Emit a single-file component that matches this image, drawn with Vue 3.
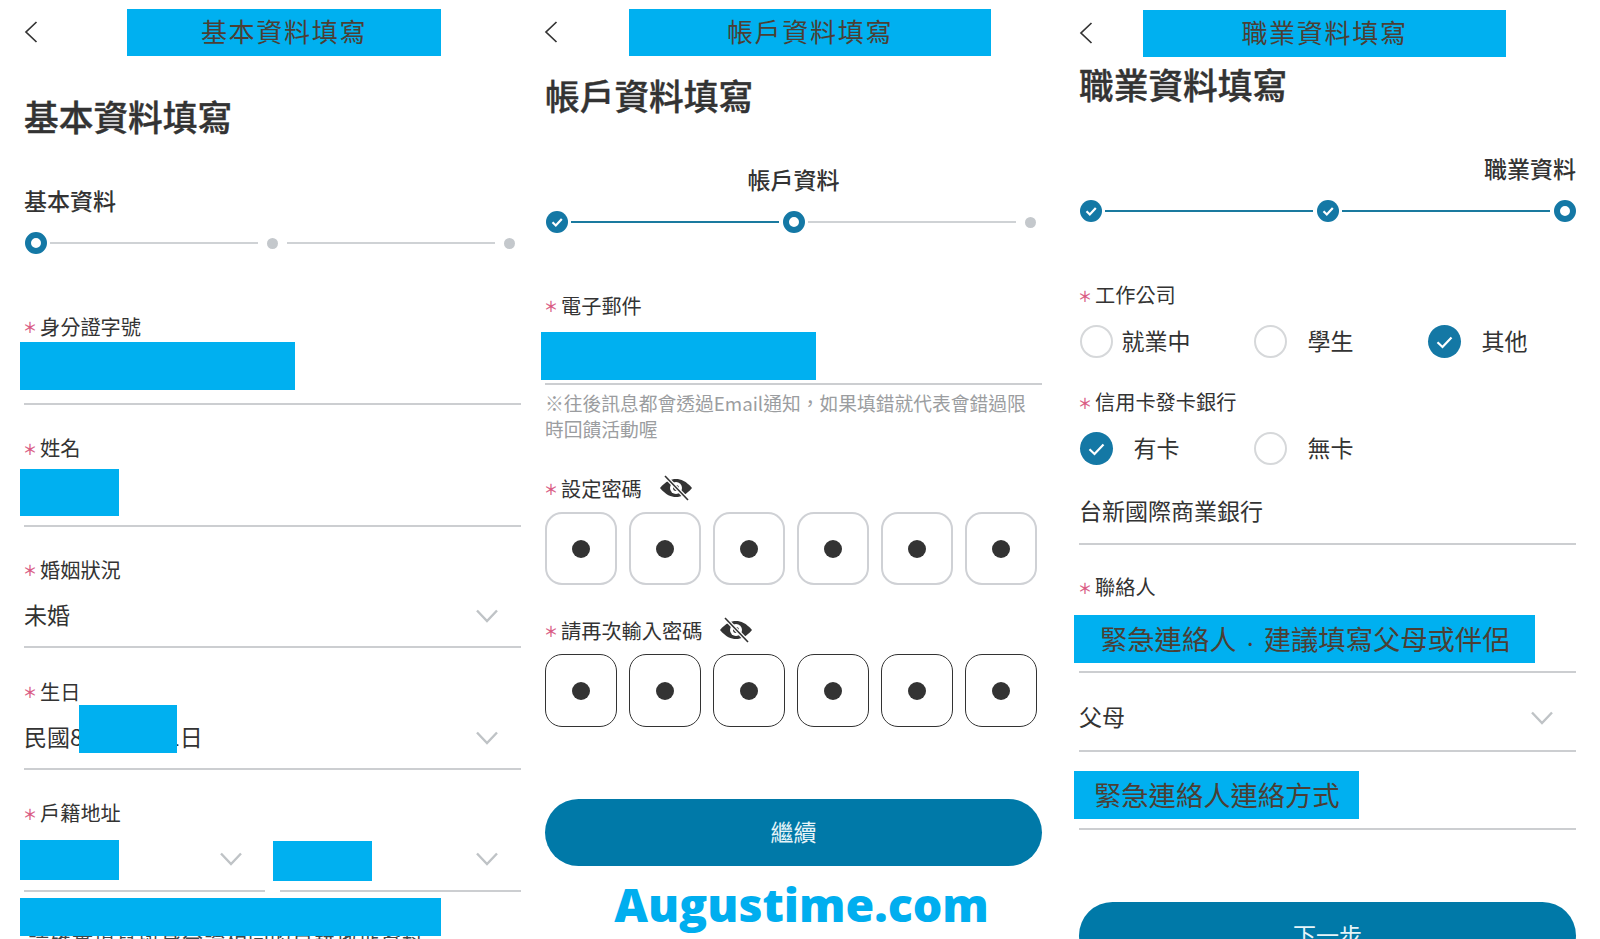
<script setup>
const otp = [1, 2, 3, 4, 5, 6]
</script>

<template>
  <div class="page">
    <!-- 基本資料 -->
    <section class="panel p1">
      <header class="top">
        <svg class="back" viewBox="0 0 14 22"><path d="M12.5 1 2 11l10.5 10" /></svg>
        <div class="mask bar b1">基本資料填寫</div>
      </header>
      <h1 class="title t1">基本資料填寫</h1>
      <div class="step-label l1">基本資料</div>
      <div class="stepper">
        <span class="slot"><i class="ring"></i></span>
        <span class="track"></span>
        <span class="slot"><i class="dot"></i></span>
        <span class="track"></span>
        <span class="slot"><i class="dot"></i></span>
      </div>

      <div class="field first">
        <div class="label"><em>＊</em>身分證字號</div>
        <div class="control"><div class="mask fill m-id"></div></div>
      </div>
      <div class="field">
        <div class="label"><em>＊</em>姓名</div>
        <div class="control"><div class="mask fill m-name"></div></div>
      </div>
      <div class="field">
        <div class="label"><em>＊</em>婚姻狀況</div>
        <div class="control">
          <span class="value">未婚</span>
          <svg class="chev" viewBox="0 0 22 14"><path d="M1 1.5 11 12 21 1.5" /></svg>
        </div>
      </div>
      <div class="field">
        <div class="label"><em>＊</em>生日</div>
        <div class="control">
          <span class="value">民國88年1月11日</span>
          <div class="mask m-birth"></div>
          <svg class="chev" viewBox="0 0 22 14"><path d="M1 1.5 11 12 21 1.5" /></svg>
        </div>
      </div>
      <div class="field addr">
        <div class="label"><em>＊</em>戶籍地址</div>
        <div class="split">
          <div class="control half">
            <div class="mask fill m-city"></div>
            <svg class="chev" viewBox="0 0 22 14"><path d="M1 1.5 11 12 21 1.5" /></svg>
          </div>
          <div class="control half">
            <div class="mask fill m-area"></div>
            <svg class="chev" viewBox="0 0 22 14"><path d="M1 1.5 11 12 21 1.5" /></svg>
          </div>
        </div>
        <div class="street">
          <span class="street-text">請確實填寫與身分證相同的戶籍地址資料</span>
          <div class="mask m-street"></div>
        </div>
      </div>
    </section>

    <!-- 帳戶資料 -->
    <section class="panel p2">
      <header class="top">
        <svg class="back" viewBox="0 0 14 22"><path d="M12.5 1 2 11l10.5 10" /></svg>
        <div class="mask bar b2">帳戶資料填寫</div>
      </header>
      <h1 class="title t2">帳戶資料填寫</h1>
      <div class="step-label l2">帳戶資料</div>
      <div class="stepper">
        <span class="slot">
          <i class="done"><svg viewBox="0 0 22 22"><path d="M6.5 11.3 9.8 14.5 15.8 8" /></svg></i>
        </span>
        <span class="track on"></span>
        <span class="slot"><i class="ring"></i></span>
        <span class="track"></span>
        <span class="slot"><i class="dot"></i></span>
      </div>

      <div class="label email"><em>＊</em>電子郵件</div>
      <div class="email-box"><div class="mask m-email"></div></div>
      <p class="hint">※往後訊息都會透過Email通知，如果填錯就代表會錯過限時回饋活動喔</p>

      <div class="label pw pw1">
        <em>＊</em>設定密碼
        <svg class="eye" viewBox="0 0 34 26">
          <path class="eye-shape" d="M1 13C7 6 12 4 17 4s10 2 16 9c-6 7-11 9-16 9S7 20 1 13Z" />
          <circle class="eye-hole" cx="17" cy="13" r="6" />
          <circle class="eye-pupil" cx="17" cy="13" r="3" />
          <path class="eye-gap" d="M6 1 29 25" />
          <path class="eye-slash" d="M6 1 29 25" />
        </svg>
      </div>
      <div class="otp">
        <span v-for="n in otp" :key="n" class="cell"><i></i></span>
      </div>

      <div class="label pw pw2">
        <em>＊</em>請再次輸入密碼
        <svg class="eye" viewBox="0 0 34 26">
          <path class="eye-shape" d="M1 13C7 6 12 4 17 4s10 2 16 9c-6 7-11 9-16 9S7 20 1 13Z" />
          <circle class="eye-hole" cx="17" cy="13" r="6" />
          <circle class="eye-pupil" cx="17" cy="13" r="3" />
          <path class="eye-gap" d="M6 1 29 25" />
          <path class="eye-slash" d="M6 1 29 25" />
        </svg>
      </div>
      <div class="otp dark">
        <span v-for="n in otp" :key="n" class="cell"><i></i></span>
      </div>

      <button class="cta c2" type="button">繼續</button>
      <div class="brand">Augustime.com</div>
    </section>

    <!-- 職業資料 -->
    <section class="panel p3">
      <header class="top t-low">
        <svg class="back" viewBox="0 0 14 22"><path d="M12.5 1 2 11l10.5 10" /></svg>
        <div class="mask bar b3">職業資料填寫</div>
      </header>
      <h1 class="title t3">職業資料填寫</h1>
      <div class="step-label l3">職業資料</div>
      <div class="stepper">
        <span class="slot">
          <i class="done"><svg viewBox="0 0 22 22"><path d="M6.5 11.3 9.8 14.5 15.8 8" /></svg></i>
        </span>
        <span class="track on"></span>
        <span class="slot">
          <i class="done"><svg viewBox="0 0 22 22"><path d="M6.5 11.3 9.8 14.5 15.8 8" /></svg></i>
        </span>
        <span class="track on"></span>
        <span class="slot"><i class="ring"></i></span>
      </div>

      <div class="label work"><em>＊</em>工作公司</div>
      <div class="radios">
        <div class="radio"><span class="circle"></span><span class="rtext near">就業中</span></div>
        <div class="radio"><span class="circle"></span><span class="rtext">學生</span></div>
        <div class="radio">
          <span class="circle checked"><svg viewBox="0 0 33 33"><path d="M9.5 17.3 14.5 22 23.5 12.5" /></svg></span>
          <span class="rtext">其他</span>
        </div>
      </div>

      <div class="label bank"><em>＊</em>信用卡發卡銀行</div>
      <div class="radios">
        <div class="radio">
          <span class="circle checked"><svg viewBox="0 0 33 33"><path d="M9.5 17.3 14.5 22 23.5 12.5" /></svg></span>
          <span class="rtext">有卡</span>
        </div>
        <div class="radio"><span class="circle"></span><span class="rtext">無卡</span></div>
      </div>

      <div class="rowline bank-name"><span class="value">台新國際商業銀行</span></div>

      <div class="label contact"><em>＊</em>聯絡人</div>
      <div class="rowline r-contact">
        <div class="mask wide">緊急連絡人<span class="sep">·</span>建議填寫父母或伴侶</div>
      </div>
      <div class="rowline r-rel">
        <span class="value">父母</span>
        <svg class="chev rel" viewBox="0 0 22 14"><path d="M1 1.5 11 12 21 1.5" /></svg>
      </div>
      <div class="rowline r-way">
        <div class="mask narrow">緊急連絡人連絡方式</div>
      </div>

      <button class="cta c3" type="button">下一步</button>
    </section>
  </div>
</template>

<style>
html,
body {
  margin: 0;
  background: #fff;
  overflow: hidden;
}
</style>

<style scoped>
.page {
  display: flex;
  height: 939px;
  overflow: hidden;
  background: #fff;
  font-family: "Noto Sans CJK TC", "Noto Sans", sans-serif;
  color: #333;
}
.panel {
  flex: none;
  width: 497px;
  box-sizing: border-box;
}
.p1 { margin-left: 24px; }
.p2 { margin-left: 24px; }
.p3 { margin-left: 37px; }

.top {
  display: flex;
  align-items: center;
  height: 47px;
  margin-top: 9px;
}
.t-low { margin-top: 10px; }
.back {
  flex: none;
  width: 14px;
  height: 22px;
  margin-top: -2px;
  fill: none;
  stroke: #333;
  stroke-width: 1.7;
}
.p2 .back { margin-left: -1px; }
.mask {
  background: #00b0f0;
  color: #4b3f35;
  flex: none;
}
.bar {
  height: 47px;
  line-height: 44px;
  text-align: center;
  font-size: 26px;
  letter-spacing: 1.7px;
}
.b1 { width: 314px; margin-left: 89px; }
.b2 { width: 362px; margin-left: 71px; }
.b3 { width: 363px; margin-left: 50px; }

.title {
  margin: 0;
  font-size: 34.7px;
  line-height: 48px;
  font-weight: 500;
  -webkit-text-stroke: 0.4px #333;
  color: #333;
}
.t1 { margin-top: 36px; }
.t2 { margin-top: 15px; }
.t3 { margin-top: 3px; }

.step-label {
  font-size: 23px;
  line-height: 32px;
  font-weight: 500;
  color: #333;
}
.l1 { margin-top: 44px; }
.l2 { margin-top: 44px; text-align: center; }
.l3 { margin-top: 44px; text-align: right; }

.stepper {
  display: flex;
  align-items: center;
  height: 22px;
  width: 496px;
  margin-left: 0.5px;
  margin-top: 16px;
}
.slot {
  flex: none;
  width: 22px;
  height: 22px;
  display: flex;
  align-items: center;
  justify-content: center;
}
.slot i {
  display: block;
  box-sizing: border-box;
  border-radius: 50%;
}
.ring {
  width: 22px;
  height: 22px;
  border: 6px solid #1478a5;
  background: #fff;
}
.dot {
  width: 11px;
  height: 11px;
  background: #c4c8cc;
}
.done {
  width: 22px;
  height: 22px;
  background: #1478a5;
}
.done svg {
  display: block;
  width: 22px;
  height: 22px;
  fill: none;
  stroke: #fff;
  stroke-width: 2.2;
}
.track {
  flex: 1;
  height: 2px;
  margin: 0 3.5px;
  background: #cfd2d5;
}
.track.on {
  background: #1a7a9f;
}

.label {
  display: flex;
  align-items: center;
  height: 28px;
  font-size: 20.2px;
  color: #333;
}
.label em {
  width: 16px;
  flex: none;
  margin-left: -1px;
  margin-right: 1px;
  font-style: normal;
  font-size: 14px;
  -webkit-text-stroke: 0.3px #d9567f;
  color: #d9567f;
}
.field {
  height: 121.7px;
}
.field.first {
  margin-top: 58px;
}
.control {
  position: relative;
  display: flex;
  align-items: center;
  justify-content: space-between;
  box-sizing: border-box;
  height: 65px;
  padding-bottom: 2px;
  border-bottom: 2px solid #ccced1;
}
.value {
  font-size: 23px;
  color: #333;
}
.chev {
  flex: none;
  width: 22px;
  height: 14px;
  margin-top: 4px;
  margin-right: 23px;
  fill: none;
  stroke: #bfc3c6;
  stroke-width: 2.4;
}
.fill {
  margin-left: -4px;
  align-self: flex-start;
}
.m-id { width: 275px; height: 48px; margin-top: 2px; }
.m-name { width: 99px; height: 47px; margin-top: 7px; }
.m-city { width: 99px; height: 40px; margin-top: 13px; }
.m-area { width: 99px; height: 40px; margin-top: 14px; margin-left: -7px; }
.m-birth {
  position: absolute;
  left: 55px;
  top: 0;
  width: 98px;
  height: 48px;
}
.split {
  display: flex;
  justify-content: space-between;
}
.half {
  width: 241px;
}
.street {
  position: relative;
  height: 50px;
}
.street-text {
  position: absolute;
  left: 4px;
  top: 31px;
  font-size: 21px;
  line-height: 30px;
  letter-spacing: 1px;
  white-space: nowrap;
  color: #444;
}
.m-street {
  position: absolute;
  left: -4px;
  top: 6px;
  width: 421px;
  height: 38px;
}

.p2 .email { margin-top: 58px; }
.email-box {
  height: 66px;
  box-sizing: border-box;
  padding-top: 13px;
  border-bottom: 2px solid #ccced1;
}
.m-email {
  width: 275px;
  height: 48px;
  margin-left: -4px;
}
.hint {
  margin: 5px 0 0;
  font-size: 18.76px;
  line-height: 26px;
  color: #9b9da0;
}
.pw1 { margin-top: 32px; }
.pw2 { margin-top: 31px; }
.eye {
  width: 34px;
  height: 26px;
  margin-left: 17px;
  flex: none;
}
.eye-shape { fill: #333; }
.eye-hole { fill: #fff; }
.eye-pupil { fill: #333; }
.eye-gap { fill: none; stroke: #fff; stroke-width: 4; }
.eye-slash { fill: none; stroke: #333; stroke-width: 1.6; }

.otp {
  display: flex;
  justify-content: space-between;
  width: 492px;
  margin-top: 10px;
}
.cell {
  display: flex;
  align-items: center;
  justify-content: center;
  box-sizing: border-box;
  width: 72px;
  height: 73px;
  border: 2px solid #cfd1d5;
  border-radius: 17px;
}
.cell i {
  display: block;
  width: 18px;
  height: 18px;
  border-radius: 50%;
  background: #333;
}
.dark .cell {
  border: 1.5px solid #333;
}

.cta {
  display: block;
  width: 497px;
  height: 67px;
  border: 0;
  border-radius: 34px;
  background: #0079a8;
  color: #e6f4f8;
  font-family: inherit;
  font-size: 23px;
  padding: 0 0 3px;
}
.c2 { margin-top: 72px; }
.c3 { margin-top: 72px; }
.brand {
  margin-top: 7px;
  margin-left: 16px;
  text-align: center;
  font-family: "Open Sans", sans-serif;
  font-weight: 800;
  font-size: 46.5px;
  line-height: 62px;
  color: #00aeef;
  white-space: nowrap;
}

.p3 .stepper { margin-top: 16px; }
.work { margin-top: 58.5px; }
.radios {
  display: grid;
  grid-template-columns: repeat(3, 174px);
  height: 34px;
  margin-top: 16px;
  margin-left: 0.5px;
}
.radio {
  display: flex;
  align-items: center;
}
.circle {
  flex: none;
  box-sizing: border-box;
  width: 33px;
  height: 33px;
  border: 2px solid #d6d8da;
  border-radius: 50%;
}
.circle.checked {
  border: 0;
  background: #1478a5;
}
.circle svg {
  display: block;
  width: 33px;
  height: 33px;
  fill: none;
  stroke: #fff;
  stroke-width: 2.2;
}
.rtext {
  margin-left: 21px;
  margin-top: -3px;
  font-size: 23px;
  color: #333;
}
.rtext.near { margin-left: 9px; }
.bank { margin-top: 29px; }
.rowline {
  display: flex;
  align-items: center;
  justify-content: space-between;
  box-sizing: border-box;
  border-bottom: 2px solid #ccced1;
}
.bank-name { height: 68.5px; margin-top: 11px; }
.contact { margin-top: 27.5px; }
.r-contact {
  height: 72px;
  align-items: flex-end;
  padding-bottom: 8px;
}
.wide {
  width: 461px;
  height: 48px;
  line-height: 46px;
  margin-left: -5px;
  padding-left: 26px;
  box-sizing: border-box;
  font-size: 27.3px;
  white-space: nowrap;
}
.sep {
  display: inline-block;
  width: 27.3px;
  text-align: center;
  font-size: 15px;
}
.r-rel {
  height: 79px;
  padding-top: 9px;
}
.r-way {
  height: 78px;
  align-items: flex-start;
  padding-top: 19px;
}
.narrow {
  width: 285px;
  height: 48px;
  line-height: 46px;
  margin-left: -5px;
  padding-left: 20px;
  box-sizing: border-box;
  font-size: 27.3px;
  white-space: nowrap;
}
</style>
